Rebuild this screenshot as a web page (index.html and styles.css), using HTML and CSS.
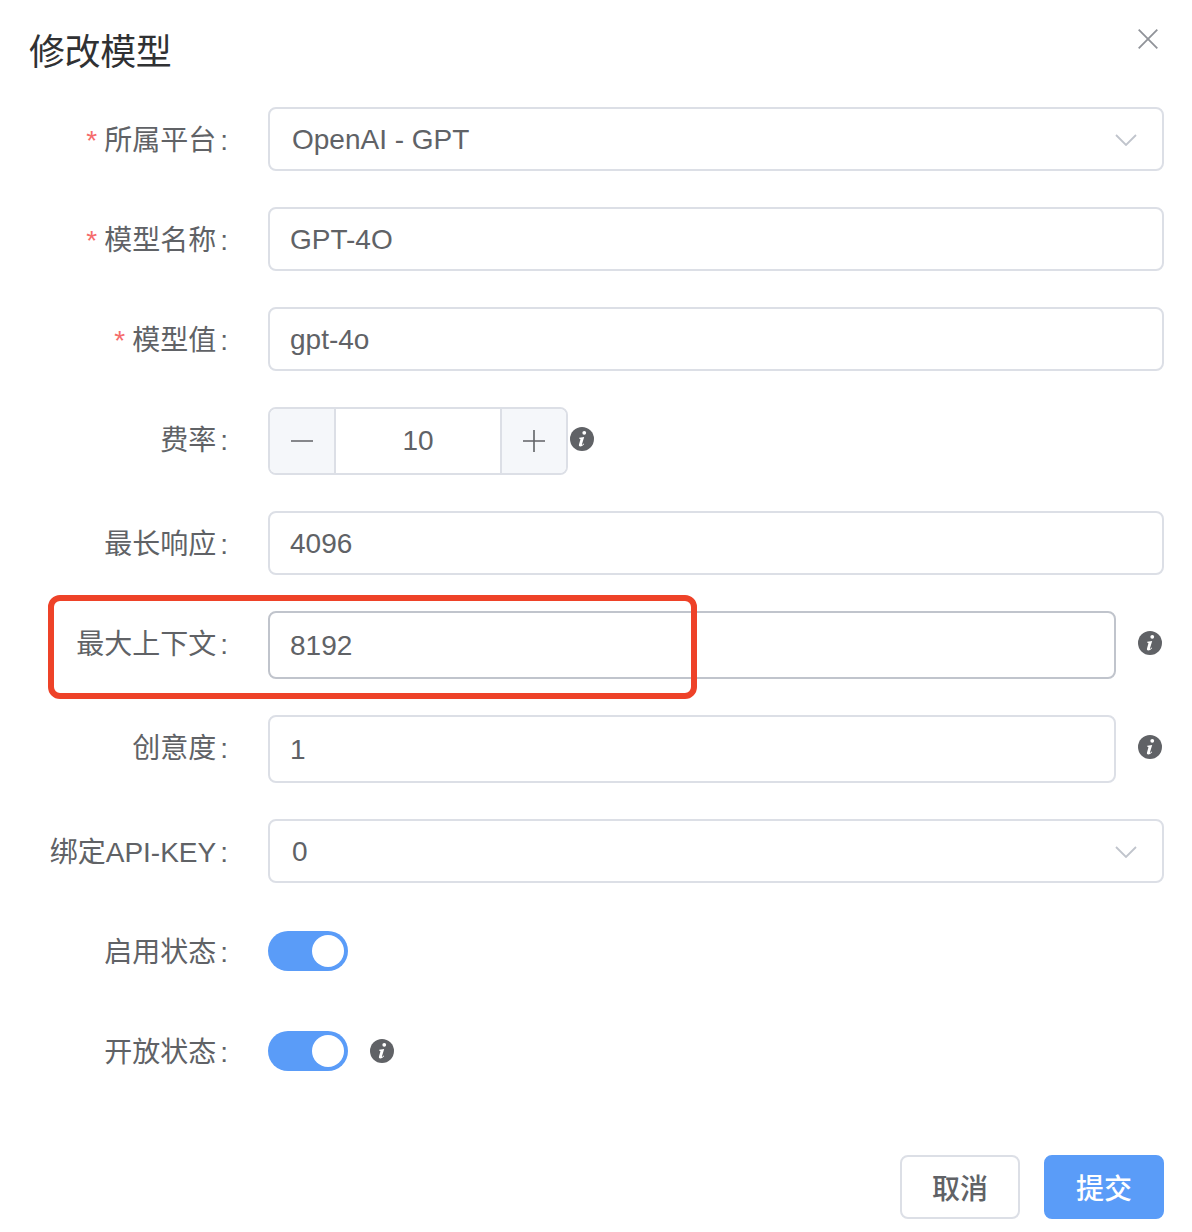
FILE: index.html
```html
<!DOCTYPE html>
<html lang="zh-CN">
<head>
  <meta charset="UTF-8">
  <meta name="viewport" content="width=device-width, initial-scale=1.0">
  <title>修改模型</title>
  <link rel="stylesheet" href="styles.css">
</head>
<body>
  <svg class="defs" width="0" height="0">
    <symbol id="info" viewBox="0 0 24 24">
      <circle cx="12" cy="12" r="12" fill="#606266"/>
      <path d="M14.300 3.900a1.900 1.900 0 1 1-.1 3.800 1.900 1.900 0 0 1 .1-3.800zM9.200 10.800l5-.9-2.300 7.600c-.1.400.3.500.6.200l1.200-1.200.5.400c-1.100 1.600-2.500 2.500-3.800 2.500-1.300 0-1.700-.9-1.400-2l1.400-4.900c.1-.5-.3-.8-1.200-.8z" fill="#fff"/>
    </symbol>
    <symbol id="chevron" viewBox="0 0 22 12">
      <path d="M1 1l10 10L21 1" fill="none" stroke="#c0c4cc" stroke-width="1.800"/>
    </symbol>
  </svg>

  <div class="dialog">
    <div class="dialog-header">
      <span class="dialog-title">修改模型</span>
      <svg class="close" width="20" height="20" viewBox="0 0 20 20">
        <path d="M.7.7l18.600 18.600M19.300.7L.7 19.300" fill="none" stroke="#909399" stroke-width="1.800"/>
      </svg>
    </div>

    <form class="form">
      <div class="row">
        <label class="label required">所属平台<span class="colon">:</span></label>
        <div class="select"><span>OpenAI - GPT</span><svg class="chevron"><use href="#chevron"/></svg></div>
      </div>
      <div class="row">
        <label class="label required">模型名称<span class="colon">:</span></label>
        <input class="input" type="text" value="GPT-4O">
      </div>
      <div class="row">
        <label class="label required">模型值<span class="colon">:</span></label>
        <input class="input" type="text" value="gpt-4o">
      </div>
      <div class="row">
        <label class="label">费率<span class="colon">:</span></label>
        <div class="number">
          <span class="step"><svg width="22" height="22" viewBox="0 0 22 22"><path d="M0 11h22" stroke="#606266" stroke-width="1.600"/></svg></span>
          <span class="number-value">10</span>
          <span class="step"><svg width="22" height="22" viewBox="0 0 22 22"><path d="M0 11h22M11 0v22" stroke="#606266" stroke-width="1.600"/></svg></span>
        </div>
        <svg class="info info-near"><use href="#info"/></svg>
      </div>
      <div class="row">
        <label class="label">最长响应<span class="colon">:</span></label>
        <input class="input" type="text" value="4096">
      </div>
      <div class="row highlight-row">
        <label class="label">最大上下文<span class="colon">:</span></label>
        <input class="input tall hover" type="text" value="8192">
        <svg class="info info-far"><use href="#info"/></svg>
        <div class="highlight"></div>
      </div>
      <div class="row">
        <label class="label">创意度<span class="colon">:</span></label>
        <input class="input tall" type="text" value="1">
        <svg class="info info-far"><use href="#info"/></svg>
      </div>
      <div class="row">
        <label class="label">绑定API-KEY<span class="colon">:</span></label>
        <div class="select"><span>0</span><svg class="chevron"><use href="#chevron"/></svg></div>
      </div>
      <div class="row switch-row">
        <label class="label">启用状态<span class="colon">:</span></label>
        <span class="switch"></span>
      </div>
      <div class="row switch-row">
        <label class="label">开放状态<span class="colon">:</span></label>
        <span class="switch"></span>
        <svg class="info info-switch"><use href="#info"/></svg>
      </div>
    </form>

    <div class="dialog-footer">
      <button class="btn" type="button">取消</button>
      <button class="btn btn-primary" type="button">提交</button>
    </div>
  </div>
</body>
</html>
```

FILE: styles.css
```css
* {
  box-sizing: border-box;
}
body {
  margin: 0;
  background: #fff;
  color: #606266;
  font-family: "Liberation Sans", "Noto Sans CJK SC", sans-serif;
  font-size: 28px;
}
.defs {
  position: absolute;
}
.dialog {
  width: 1192px;
  height: 1232px;
  padding: 0 28px;
}
.dialog-header {
  height: 107px;
  display: flex;
  justify-content: space-between;
  align-items: flex-start;
}
.dialog-title {
  margin-top: 28px;
  margin-left: 1px;
  font-size: 36px;
  line-height: 50px;
  letter-spacing: -0.4px;
  color: #303133;
}
.close {
  margin-top: 29px;
  margin-right: 6px;
}
.form {
  display: flex;
  flex-direction: column;
  gap: 36px;
}
.row {
  display: flex;
  align-items: flex-start;
  position: relative;
}
.switch-row {
  height: 64px;
}
.label {
  flex: 0 0 240px;
  height: 64px;
  padding-top: 4px;
  padding-right: 40px;
  line-height: 60px;
  text-align: right;
}
.colon {
  margin-left: 4px;
}
.required::before {
  content: "*";
  color: #f56c6c;
  margin-right: 7px;
}
.input {
  flex: 1;
  min-width: 0;
  height: 64px;
  padding: 2px 20px 0;
  border: 2px solid #dcdfe6;
  border-radius: 8px;
  background: #fff;
  color: #606266;
  font: inherit;
  outline: none;
}
.input.tall {
  height: 68px;
}
.input.hover {
  border-color: #c0c4cc;
}
.select {
  flex: 1;
  height: 64px;
  padding: 2px 25px 0 22px;
  border: 2px solid #dcdfe6;
  border-radius: 8px;
  display: flex;
  align-items: center;
  justify-content: space-between;
}
.chevron {
  width: 22px;
  height: 12px;
}
.number {
  width: 300px;
  height: 68px;
  border: 2px solid #dcdfe6;
  border-radius: 8px;
  display: flex;
  overflow: hidden;
}
.step {
  flex: 0 0 64px;
  background: #f5f7fa;
  display: flex;
  align-items: center;
  justify-content: center;
}
.number-value {
  flex: 1;
  border-left: 2px solid #dcdfe6;
  border-right: 2px solid #dcdfe6;
  line-height: 64px;
  text-align: center;
}
.info {
  width: 24px;
  height: 24px;
  flex: none;
  margin-top: 20px;
}
.info-near {
  margin-left: 2px;
}
.info-far {
  margin-left: 22px;
  margin-right: 2px;
}
.info-switch {
  margin-left: 22px;
}
.switch {
  width: 80px;
  height: 40px;
  margin-top: 12px;
  border-radius: 20px;
  background: #5a9cf8;
  position: relative;
}
.switch::after {
  content: "";
  position: absolute;
  top: 4px;
  right: 4px;
  width: 32px;
  height: 32px;
  border-radius: 50%;
  background: #fff;
}
.highlight {
  position: absolute;
  left: 20px;
  top: -16px;
  width: 649px;
  height: 104px;
  border: 6px solid #ee4228;
  border-radius: 12px;
  pointer-events: none;
}
.dialog-footer {
  margin-top: 72px;
  display: flex;
  justify-content: flex-end;
  gap: 24px;
}
.btn {
  width: 120px;
  height: 64px;
  border: 2px solid #dcdfe6;
  border-radius: 8px;
  background: #fff;
  color: #606266;
  font: inherit;
  font-weight: 500;
}
.btn-primary {
  border-color: #5a9cf8;
  background: #5a9cf8;
  color: #fff;
}
```
